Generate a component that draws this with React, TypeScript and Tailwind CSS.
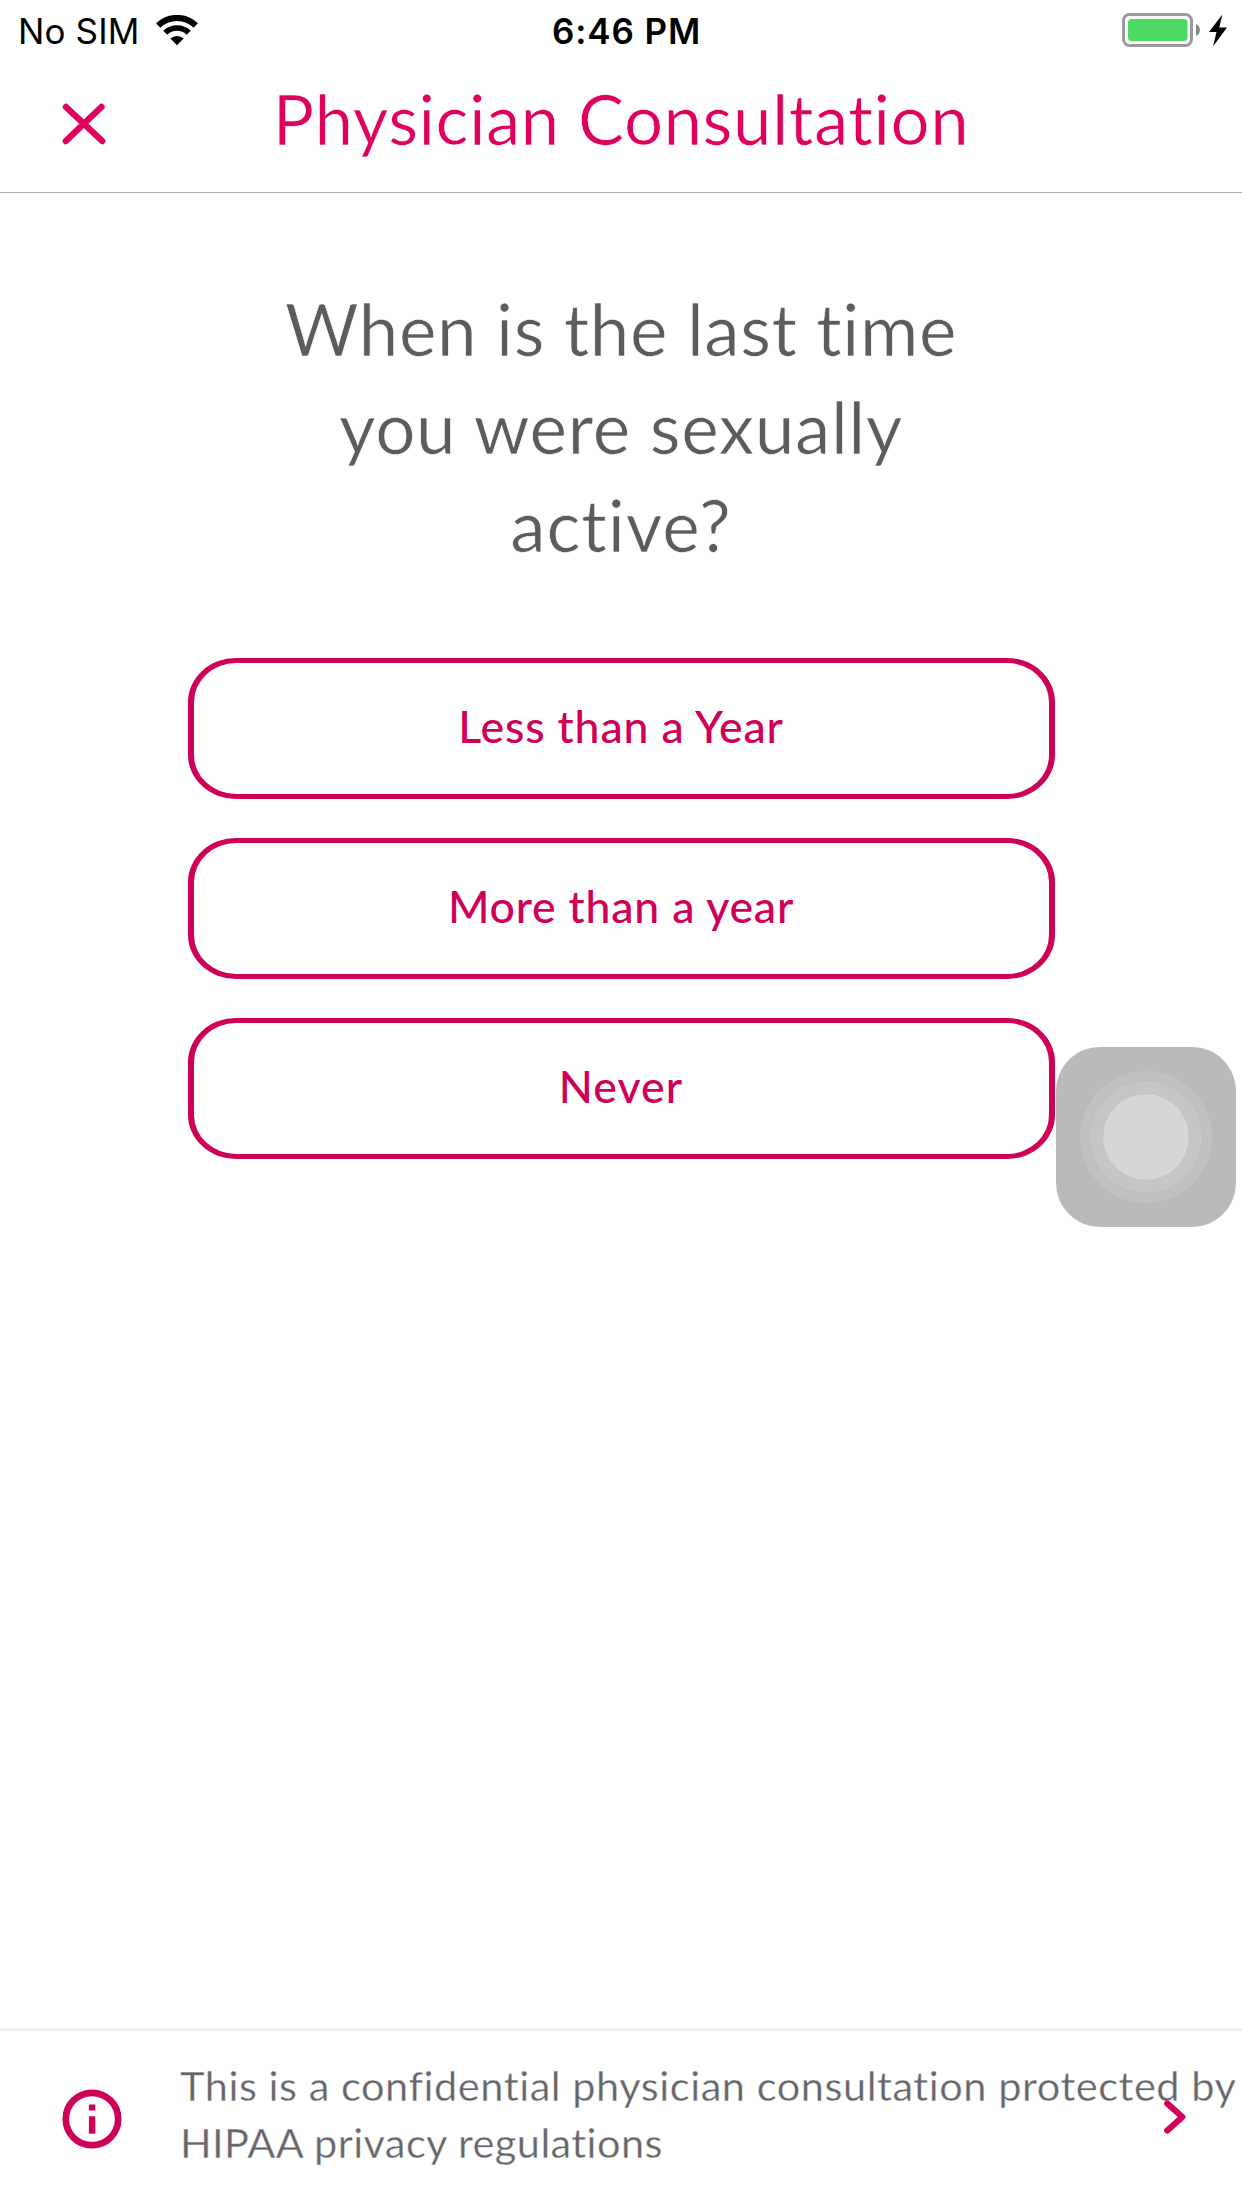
import React from "react";

function WifiIcon() {
  return (
    <svg width="42" height="31" viewBox="0 0 42 31" fill="none" stroke="#000">
      <path d="M2.2 10.6 A27 27 0 0 1 39.8 10.6" strokeWidth="6.2" />
      <path d="M9.2 17.8 A17 17 0 0 1 32.8 17.8" strokeWidth="5.6" />
      <path d="M21 30.2 L14.4 23.6 A9.5 9.5 0 0 1 27.6 23.6 Z" fill="#000" stroke="none" />
    </svg>
  );
}

function BatteryIcon() {
  return (
    <svg width="106" height="36" viewBox="0 0 106 36">
      <rect x="1.5" y="2.5" width="68" height="31" rx="6" fill="none" stroke="#9b9b9e" strokeWidth="3" />
      <rect x="6" y="7" width="59.5" height="22" rx="3.5" fill="#4cd964" />
      <path d="M74 12 A6.6 6.6 0 0 1 74 24 Z" fill="#88888b" />
      <path d="M100.3 2.5 L87 20 H94.5 L91 34.5 L105 15.5 H97.3 Z" fill="#000" />
    </svg>
  );
}

function CloseIcon() {
  return (
    <svg width="44" height="42" viewBox="0 0 44 42" fill="none" stroke="#e0005d" strokeWidth="6.4" strokeLinecap="round">
      <path d="M4 4 L40.2 38 M39.4 4 L3.8 38" />
    </svg>
  );
}

function InfoIcon() {
  return (
    <svg width="60" height="60" viewBox="0 0 60 60" fill="none">
      <circle cx="30" cy="30" r="26.2" stroke="#cf0058" strokeWidth="6.7" />
      <rect x="26.9" y="15.5" width="6.4" height="6" fill="#cf0058" />
      <rect x="26.9" y="27.3" width="6.4" height="17.4" fill="#cf0058" />
    </svg>
  );
}

function ChevronIcon() {
  return (
    <svg width="22" height="34" viewBox="0 0 22 34" fill="none" stroke="#d6005c" strokeWidth="6.3" strokeLinecap="round" strokeLinejoin="round">
      <path d="M3.3 3.5 L18.3 17 L3.3 30.5" />
    </svg>
  );
}

const answers = [
  { label: "Less than a Year", spacing: "tracking-[0.85px]" },
  { label: "More than a year", spacing: "tracking-[0.8px]" },
  { label: "Never", spacing: "tracking-[1.1px]" },
];

export default function App() {
  return (
    <div className="relative flex h-[2208px] w-[1242px] flex-col overflow-hidden bg-white font-[Lato,sans-serif]">
      <div className="grid h-[60px] shrink-0 grid-cols-3 font-[Inter,sans-serif] text-[35px] leading-[62px] text-black">
        <div className="flex items-start pl-[18px]">
          <span className="whitespace-nowrap tracking-[0.13px]">No SIM</span>
          <span className="ml-[17px] mt-[15px]">
            <WifiIcon />
          </span>
        </div>
        <div className="whitespace-nowrap pl-[11px] text-center font-semibold tracking-[0.9px]">6:46 PM</div>
        <div className="flex items-start justify-end pr-[14px] pt-[12px]">
          <BatteryIcon />
        </div>
      </div>

      <header className="grid h-[133px] shrink-0 grid-cols-[180px_1fr_180px] border-b border-[#acacac]">
        <button className="flex items-start pl-[62px] pt-[43px]" aria-label="Close">
          <CloseIcon />
        </button>
        <h1 className="whitespace-nowrap text-center text-[69px] leading-[117px] tracking-[0.5px] text-[#e0005d] [-webkit-text-stroke:0.7px_white]">
          Physician Consultation
        </h1>
      </header>

      <main className="flex grow flex-col items-center pt-[87px]">
        <h2 className="text-center text-[71px] leading-[98px] text-[#5c5c5c] [-webkit-text-stroke:0.7px_white]">
          <span className="block tracking-[0.6px]">When is the last time</span>
          <span className="block tracking-[0.65px]">you were sexually</span>
          <span className="block tracking-[0.95px]">active?</span>
        </h2>
        <div className="mt-[84px] flex w-[867px] flex-col gap-[39px]">
          {answers.map((a) => (
            <button
              key={a.label}
              className="flex h-[141px] items-center justify-center rounded-[48px_/_44px] border-x-[6px] border-y-[5px] border-[#cf0058] pb-[5px] text-[44.6px] font-medium text-[#cf0058]"
            >
              <span className={a.spacing}>{a.label}</span>
            </button>
          ))}
        </div>
      </main>

      <footer className="flex h-[180px] shrink-0 items-start border-t-[3px] border-[#efefef]">
        <span className="ml-[61.5px] mt-[57.5px] shrink-0">
          <InfoIcon />
        </span>
        <p className="ml-[58.5px] mt-[26px] whitespace-nowrap text-[41.5px] leading-[57px] text-[#66666a] [-webkit-text-stroke:0.35px_white]">
          <span className="block tracking-[0.54px]">This is a confidential physician consultation protected by</span>
          <span className="block tracking-[0.4px]">HIPAA privacy regulations</span>
        </p>
      </footer>

      <span className="absolute bottom-[74px] right-[56px]">
        <ChevronIcon />
      </span>

      <div className="absolute right-[6px] top-[1047px] flex size-[180px] items-center justify-center rounded-[44px] bg-[#bababa]">
        <div className="flex size-[132px] items-center justify-center rounded-full bg-[#c1c1c1]">
          <div className="flex size-[114px] items-center justify-center rounded-full border border-[#bdbdbd] bg-[#c6c6c6]">
            <div className="size-[88px] rounded-full border border-[#c0c0c0] bg-[#d6d6d6]" />
          </div>
        </div>
      </div>
    </div>
  );
}
